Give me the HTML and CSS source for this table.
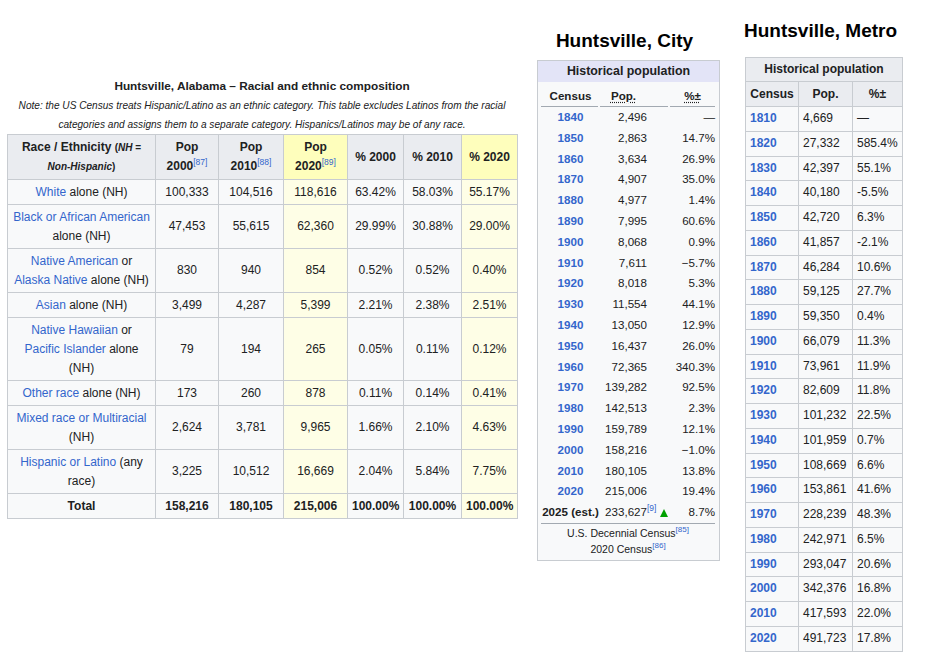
FILE: index.html
```html
<!DOCTYPE html>
<html lang="en">
<head>
<meta charset="utf-8">
<title>Huntsville demographics</title>
<link rel="stylesheet" href="styles.css">
</head>
<body>
<div class="collage">

  <section class="race">
    <div class="race-title">Huntsville, Alabama – Racial and ethnic composition</div>
    <div class="race-note">Note: the US Census treats Hispanic/Latino as an ethnic category. This table excludes Latinos from the racial categories and assigns them to a separate category. Hispanics/Latinos may be of any race.</div>
    <table class="wt race-table">
      <colgroup>
        <col class="c-race"><col class="c-pop"><col class="c-pop2"><col class="c-pop3"><col class="c-pct"><col class="c-pct2"><col class="c-pct3">
      </colgroup>
      <thead>
        <tr>
          <th>Race / Ethnicity <small>(<i>NH</i> = <i>Non-Hispanic</i>)</small></th>
          <th>Pop<br>2000<sup class="ref">[87]</sup></th>
          <th>Pop<br>2010<sup class="ref">[88]</sup></th>
          <th class="hl">Pop<br>2020<sup class="ref">[89]</sup></th>
          <th>% 2000</th>
          <th>% 2010</th>
          <th class="hl">% 2020</th>
        </tr>
      </thead>
      <tbody>
        <tr><td><a>White</a> alone (NH)</td><td>100,333</td><td>104,516</td><td class="hl">118,616</td><td>63.42%</td><td>58.03%</td><td class="hl">55.17%</td></tr>
        <tr><td><a>Black or African American</a><br>alone (NH)</td><td>47,453</td><td>55,615</td><td class="hl">62,360</td><td>29.99%</td><td>30.88%</td><td class="hl">29.00%</td></tr>
        <tr><td><a>Native American</a> or<br><a>Alaska Native</a> alone (NH)</td><td>830</td><td>940</td><td class="hl">854</td><td>0.52%</td><td>0.52%</td><td class="hl">0.40%</td></tr>
        <tr><td><a>Asian</a> alone (NH)</td><td>3,499</td><td>4,287</td><td class="hl">5,399</td><td>2.21%</td><td>2.38%</td><td class="hl">2.51%</td></tr>
        <tr><td><a>Native Hawaiian</a> or<br><a>Pacific Islander</a> alone<br>(NH)</td><td>79</td><td>194</td><td class="hl">265</td><td>0.05%</td><td>0.11%</td><td class="hl">0.12%</td></tr>
        <tr><td><a>Other race</a> alone (NH)</td><td>173</td><td>260</td><td class="hl">878</td><td>0.11%</td><td>0.14%</td><td class="hl">0.41%</td></tr>
        <tr><td><a>Mixed race or Multiracial</a><br>(NH)</td><td>2,624</td><td>3,781</td><td class="hl">9,965</td><td>1.66%</td><td>2.10%</td><td class="hl">4.63%</td></tr>
        <tr><td><a>Hispanic or Latino</a> (any<br>race)</td><td>3,225</td><td>10,512</td><td class="hl">16,669</td><td>2.04%</td><td>5.84%</td><td class="hl">7.75%</td></tr>
        <tr class="total"><td>Total</td><td>158,216</td><td>180,105</td><td class="hl">215,006</td><td>100.00%</td><td>100.00%</td><td class="hl">100.00%</td></tr>
      </tbody>
    </table>
  </section>

  <section class="city">
    <h2 class="heading city-heading">Huntsville, City</h2>
    <div class="histbox">
      <div class="histbox-title">Historical population</div>
      <table class="hp">
        <colgroup><col class="hp-year"><col class="hp-pop"><col class="hp-note"><col class="hp-pct"></colgroup>
        <thead>
          <tr><th class="gap">Census</th><th><abbr>Pop.</abbr></th><th class="gap"></th><th class="pct-h"><abbr>%±</abbr></th></tr>
        </thead>
        <tbody>
          <tr><td class="yr">1840</td><td class="num">2,496</td><td></td><td class="pct">—</td></tr>
          <tr><td class="yr">1850</td><td class="num">2,863</td><td></td><td class="pct">14.7%</td></tr>
          <tr><td class="yr">1860</td><td class="num">3,634</td><td></td><td class="pct">26.9%</td></tr>
          <tr><td class="yr">1870</td><td class="num">4,907</td><td></td><td class="pct">35.0%</td></tr>
          <tr><td class="yr">1880</td><td class="num">4,977</td><td></td><td class="pct">1.4%</td></tr>
          <tr><td class="yr">1890</td><td class="num">7,995</td><td></td><td class="pct">60.6%</td></tr>
          <tr><td class="yr">1900</td><td class="num">8,068</td><td></td><td class="pct">0.9%</td></tr>
          <tr><td class="yr">1910</td><td class="num">7,611</td><td></td><td class="pct">−5.7%</td></tr>
          <tr><td class="yr">1920</td><td class="num">8,018</td><td></td><td class="pct">5.3%</td></tr>
          <tr><td class="yr">1930</td><td class="num">11,554</td><td></td><td class="pct">44.1%</td></tr>
          <tr><td class="yr">1940</td><td class="num">13,050</td><td></td><td class="pct">12.9%</td></tr>
          <tr><td class="yr">1950</td><td class="num">16,437</td><td></td><td class="pct">26.0%</td></tr>
          <tr><td class="yr">1960</td><td class="num">72,365</td><td></td><td class="pct">340.3%</td></tr>
          <tr><td class="yr">1970</td><td class="num">139,282</td><td></td><td class="pct">92.5%</td></tr>
          <tr><td class="yr">1980</td><td class="num">142,513</td><td></td><td class="pct">2.3%</td></tr>
          <tr><td class="yr">1990</td><td class="num">159,789</td><td></td><td class="pct">12.1%</td></tr>
          <tr><td class="yr">2000</td><td class="num">158,216</td><td></td><td class="pct">−1.0%</td></tr>
          <tr><td class="yr">2010</td><td class="num">180,105</td><td></td><td class="pct">13.8%</td></tr>
          <tr><td class="yr">2020</td><td class="num">215,006</td><td></td><td class="pct">19.4%</td></tr>
          <tr><td class="yr est">2025 (est.)</td><td class="num">233,627</td><td class="note"><sup class="ref">[9]</sup> <svg class="up" width="8" height="8" viewBox="0 0 8 8"><polygon points="4,0 8,8 0,8" fill="#00a000"/></svg></td><td class="pct">8.7%</td></tr>
        </tbody>
        <tfoot>
          <tr><td colspan="4" class="src">U.S. Decennial Census<sup class="ref">[85]</sup><br>2020 Census<sup class="ref">[86]</sup></td></tr>
        </tfoot>
      </table>
    </div>
  </section>

  <section class="metro">
    <h2 class="heading metro-heading">Huntsville, Metro</h2>
    <table class="wt metro-table">
      <colgroup><col class="m-year"><col class="m-pop"><col class="m-pct"></colgroup>
      <thead>
        <tr class="m-cap"><th colspan="3">Historical population</th></tr>
        <tr class="m-head"><th>Census</th><th>Pop.</th><th>%±</th></tr>
      </thead>
      <tbody>
        <tr><td class="yr">1810</td><td>4,669</td><td>—</td></tr>
        <tr><td class="yr">1820</td><td>27,332</td><td>585.4%</td></tr>
        <tr><td class="yr">1830</td><td>42,397</td><td>55.1%</td></tr>
        <tr><td class="yr">1840</td><td>40,180</td><td>-5.5%</td></tr>
        <tr><td class="yr">1850</td><td>42,720</td><td>6.3%</td></tr>
        <tr><td class="yr">1860</td><td>41,857</td><td>-2.1%</td></tr>
        <tr><td class="yr">1870</td><td>46,284</td><td>10.6%</td></tr>
        <tr><td class="yr">1880</td><td>59,125</td><td>27.7%</td></tr>
        <tr><td class="yr">1890</td><td>59,350</td><td>0.4%</td></tr>
        <tr><td class="yr">1900</td><td>66,079</td><td>11.3%</td></tr>
        <tr><td class="yr">1910</td><td>73,961</td><td>11.9%</td></tr>
        <tr><td class="yr">1920</td><td>82,609</td><td>11.8%</td></tr>
        <tr><td class="yr">1930</td><td>101,232</td><td>22.5%</td></tr>
        <tr><td class="yr">1940</td><td>101,959</td><td>0.7%</td></tr>
        <tr><td class="yr">1950</td><td>108,669</td><td>6.6%</td></tr>
        <tr><td class="yr">1960</td><td>153,861</td><td>41.6%</td></tr>
        <tr><td class="yr">1970</td><td>228,239</td><td>48.3%</td></tr>
        <tr><td class="yr">1980</td><td>242,971</td><td>6.5%</td></tr>
        <tr><td class="yr">1990</td><td>293,047</td><td>20.6%</td></tr>
        <tr><td class="yr">2000</td><td>342,376</td><td>16.8%</td></tr>
        <tr><td class="yr">2010</td><td>417,593</td><td>22.0%</td></tr>
        <tr><td class="yr">2020</td><td>491,723</td><td>17.8%</td></tr>
      </tbody>
    </table>
  </section>

</div>
</body>
</html>
```

FILE: styles.css
```css
html, body {
  margin: 0;
  padding: 0;
  background: #ffffff;
}

body {
  font-family: "Liberation Sans", Arial, sans-serif;
  color: #202122;
}

.collage {
  display: flex;
  align-items: flex-start;
  width: 931px;
  height: 664px;
  overflow: hidden;
}

a {
  color: #3366cc;
  text-decoration: none;
}

.ref {
  color: #3366cc;
  font-weight: normal;
  font-size: 8.5px;
  line-height: 1;
  vertical-align: 5px;
}

/* ---------- Left: racial composition ---------- */
.race {
  margin-left: 7px;
  width: 510px;
  padding-top: 76px;
}

.race-title {
  font-weight: bold;
  font-size: 11.8px;
  line-height: 20px;
  text-align: center;
}

.race-note {
  font-style: italic;
  font-size: 10.1px;
  line-height: 19px;
  text-align: center;
}

.wt {
  border-collapse: collapse;
  table-layout: fixed;
  background: #f8f9fa;
  border: 1px solid #c8ccd1;
}

.wt th, .wt td {
  border: 1px solid #c8ccd1;
}

.race-table {
  width: 510px;
  font-size: 12px;
}

.race-table th, .race-table td {
  padding: 2.5px 4px;
  line-height: 19px;
  text-align: center;
  vertical-align: middle;
}

.race-table th {
  background: #eaecf0;
  font-weight: bold;
  padding-top: 3px;
  padding-bottom: 3px;
}

.race-table th small {
  font-size: 10px;
}

.race-table th.hl {
  background: #fefebc;
}

.race-table td.hl {
  background: #fefee6;
}

.race-table .total td {
  font-weight: bold;
}

.c-race { width: 148px; }
.c-pop { width: 63px; }
.c-pop2 { width: 65px; }
.c-pop3 { width: 64px; }
.c-pct { width: 56px; }
.c-pct2 { width: 58px; }
.c-pct3 { width: 56px; }

/* ---------- Headings ---------- */
.heading {
  margin: 0;
  font-size: 19px;
  font-weight: bold;
  line-height: 24px;
  color: #000000;
  white-space: nowrap;
}

/* ---------- Middle: city historical population ---------- */
.city {
  margin-left: 20px;
  width: 183px;
  padding-top: 29px;
}

.city-heading {
  text-align: center;
  padding-right: 8px;
  margin-bottom: 7px;
}

.histbox {
  border: 1px solid #c8ccd1;
  background: #f8f9fa;
  padding-bottom: 3px;
}

.histbox-title {
  background: #e3e4f7;
  font-weight: bold;
  font-size: 12.4px;
  line-height: 21px;
  text-align: center;
}

.hp {
  width: 174px;
  margin: 4px 4px 0 3px;
  border-collapse: collapse;
  table-layout: fixed;
  font-size: 11.6px;
}

.hp-year { width: 59px; }
.hp-pop { width: 47px; }
.hp-note { width: 23px; }
.hp-pct { width: 45px; }

.hp th {
  padding: 0 0 1px 0;
  line-height: 20px;
  font-weight: bold;
  text-align: center;
  background: linear-gradient(#a2a9b1, #a2a9b1) no-repeat left bottom / 100% 1px;
}

.hp th.gap {
  background-size: calc(100% - 2px) 1px;
}

.hp th.pct-h {
  text-align: center;
}

.hp abbr {
  text-decoration: underline dotted;
  text-underline-offset: 2px;
}

.hp td {
  padding: 0;
  height: 20.8px;
  line-height: 20.8px;
  white-space: nowrap;
}

.hp td.yr {
  text-align: center;
  font-weight: bold;
  color: #3366cc;
}

.hp td.yr.est {
  color: #202122;
}

.hp td.num {
  text-align: right;
}

.hp td.note {
  text-align: left;
}

.hp td.pct {
  text-align: right;
}

.up {
  vertical-align: -1px;
}

.hp tfoot td.src {
  height: auto;
  border-top: 1px solid #a2a9b1;
  padding-top: 1px;
  font-size: 10.5px;
  line-height: 16px;
  text-align: center;
  white-space: normal;
}

.hp tfoot .ref {
  font-size: 8px;
}

/* ---------- Right: metro historical population ---------- */
.metro {
  margin-left: 25px;
  width: 157px;
  padding-top: 19px;
}

.metro-heading {
  margin-left: -1px;
  margin-bottom: 14px;
}

.metro-table {
  width: 157px;
  font-size: 12px;
}

.m-year { width: 53px; }
.m-pop { width: 54px; }
.m-pct { width: 50px; }

.metro-table th {
  background: #eaecf0;
  font-weight: bold;
  text-align: center;
  padding: 2px 4px;
}

.metro-table .m-cap th {
  line-height: 19px;
}

.metro-table .m-head th {
  line-height: 20px;
}

.metro-table td {
  padding: 2px 4px;
  line-height: 19.75px;
  text-align: left;
  white-space: nowrap;
}

.metro-table td.yr {
  font-weight: bold;
  color: #3366cc;
}
```
